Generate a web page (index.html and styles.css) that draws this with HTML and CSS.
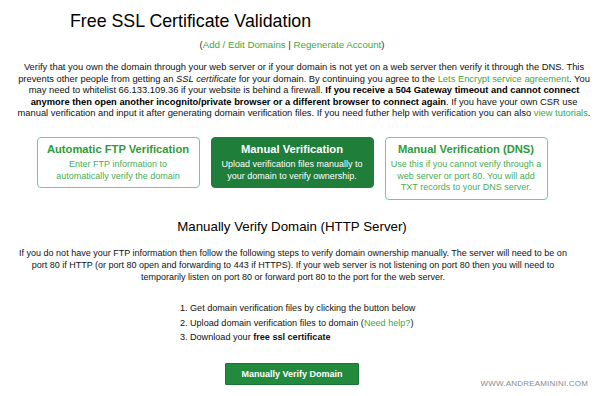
FILE: index.html
```html
<!DOCTYPE html>
<html>
<head>
<meta charset="utf-8">
<link rel="stylesheet" href="styles.css">
</head>
<body>
<div class="page">
  <h1 class="title">Free SSL Certificate Validation</h1>
  <div class="sublinks">(<a href="#">Add / Edit Domains</a> | <a href="#">Regenerate Account</a>)</div>
  <p class="intro">Verify that you own the domain through your web server or if your domain is not yet on a web server then verify it through the DNS. This prevents other people from getting an <em>SSL certificate</em> for your domain. By continuing you agree to the <a href="#">Lets Encrypt service agreement</a>. You may need to whitelist 66.133.109.36 if your website is behind a firewall. <strong>If you receive a 504 Gateway timeout and cannot connect anymore then open another incognito/private browser or a different browser to connect again</strong>. If you have your own CSR use manual verification and input it after generating domain verification files. If you need futher help with verification you can also <a href="#">view tutorials</a>.</p>
  <div class="options">
    <div class="opt">
      <div class="opt-title">Automatic FTP Verification</div>
      <div class="opt-desc">Enter FTP information to automatically verify the domain</div>
    </div>
    <div class="opt opt-active">
      <div class="opt-title">Manual Verification</div>
      <div class="opt-desc">Upload verification files manually to your domain to verify ownership.</div>
    </div>
    <div class="opt">
      <div class="opt-title">Manual Verification (DNS)</div>
      <div class="opt-desc">Use this if you cannot verify through a web server or port 80. You will add TXT records to your DNS server.</div>
    </div>
  </div>
  <h2 class="section-title">Manually Verify Domain (HTTP Server)</h2>
  <p class="info">If you do not have your FTP information then follow the following steps to verify domain ownership manually. The server will need to be on port 80 if HTTP (or port 80 open and forwarding to 443 if HTTPS). If your web server is not listening on port 80 then you will need to temporarily listen on port 80 or forward port 80 to the port for the web server.</p>
  <div class="steps-wrap">
    <ol class="steps">
      <li>Get domain verification files by clicking the button below</li>
      <li>Upload domain verification files to domain (<a href="#">Need help?</a>)</li>
      <li>Download your <strong>free ssl certificate</strong></li>
    </ol>
  </div>
  <div class="btn-row"><button class="btn">Manually Verify Domain</button></div>
</div>
<div class="watermark">WWW.ANDREAMININI.COM</div>
</body>
</html>
```
FILE: styles.css
```css
html, body {
  margin: 0;
  padding: 0;
  background: #fff;
}
body {
  font-family: "Liberation Sans", Arial, sans-serif;
  color: #111;
  width: 600px;
  height: 396px;
  overflow: hidden;
  position: relative;
}
a {
  color: #3aa845;
  text-decoration: none;
}
.page {
  width: 584px;
  padding-top: 10px;
}
.title {
  margin: 0 0 0 70px;
  font-size: 17.8px;
  font-weight: normal;
  line-height: 22px;
  color: #000;
}
.sublinks {
  margin-top: 7px;
  text-align: center;
  font-size: 9.7px;
  line-height: 12px;
  color: #333;
}
.intro {
  margin: 11px 0 0 15px;
  width: 578px;
  text-align: center;
  font-size: 9.35px;
  line-height: 11.6px;
  color: #111;
}
.intro strong {
  font-weight: bold;
  color: #000;
}
.options {
  display: flex;
  justify-content: center;
  align-items: flex-start;
  gap: 11px;
  margin-top: 17px;
}
.opt {
  width: 163px;
  box-sizing: border-box;
  border: 1px solid #7cc88a;
  border-radius: 4px;
  padding: 4px 4.5px 5px;
  text-align: center;
  color: #3fae4c;
}
.opt-title {
  font-weight: bold;
  font-size: 11.2px;
  line-height: 14px;
  color: #2e9b3a;
}
.opt-desc {
  margin-top: 3px;
  font-size: 9px;
  line-height: 11.7px;
  color: #4aad55;
}
.opt-active {
  background: #1f7e3a;
  border-color: #1f7e3a;
}
.opt-active .opt-title,
.opt-active .opt-desc {
  color: #fff;
}
.section-title {
  margin: 18px 0 0 0;
  text-align: center;
  font-size: 13.3px;
  font-weight: normal;
  line-height: 18px;
  color: #000;
}
.info {
  margin: 11px 0 0 15px;
  width: 556px;
  text-align: center;
  font-size: 9px;
  line-height: 12px;
  color: #111;
}
.steps-wrap {
  margin-top: 18px;
  padding-left: 168px;
}
.steps {
  margin: 0;
  padding-left: 22px;
  font-size: 9.1px;
  line-height: 14.5px;
  color: #111;
}
.btn-row {
  margin-top: 18px;
  display: flex;
  justify-content: center;
}
.btn {
  font-family: "Liberation Sans", Arial, sans-serif;
  font-weight: bold;
  font-size: 9px;
  color: #fff;
  background: #228a3d;
  border: 1px solid #1b7433;
  border-radius: 1px;
  width: 134px;
  height: 22px;
  padding: 0;
}
.watermark {
  position: absolute;
  right: 12px;
  bottom: 8px;
  font-size: 8px;
  color: #8a8a8a;
  letter-spacing: 0.2px;
}
```
